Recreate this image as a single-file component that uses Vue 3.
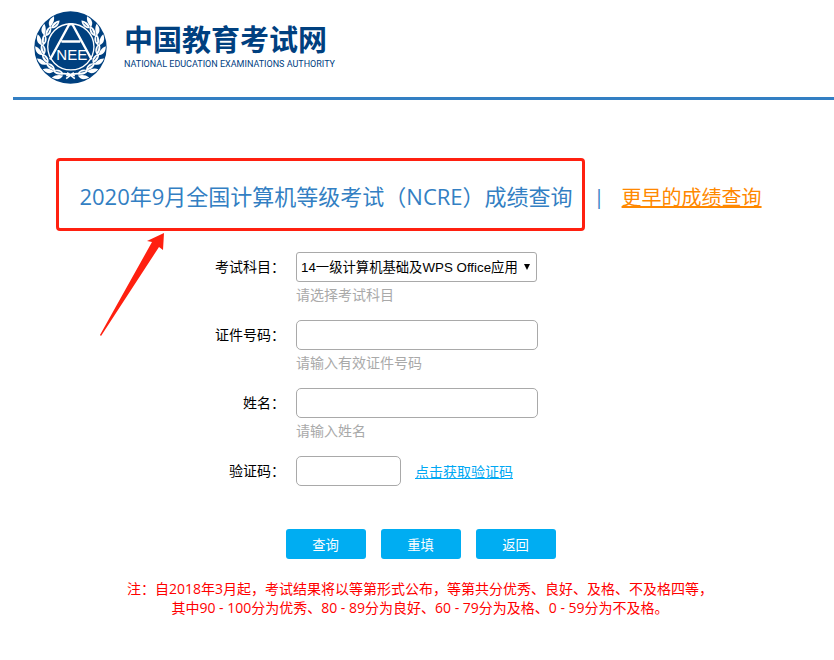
<script setup>
import { ref } from "vue";

const subjects = ["14一级计算机基础及WPS Office应用"];
const leafAngles = [34, 54, 74, 94, 114, 134, 154];

const subject = ref(subjects[0]);
const idNumber = ref("");
const name = ref("");
const captcha = ref("");

const resetForm = () => {
  subject.value = subjects[0];
  idNumber.value = "";
  name.value = "";
  captcha.value = "";
};
</script>

<template>
  <div class="page" lang="zh-CN">
    <header class="header">
      <svg class="emblem" viewBox="0 0 218 218" aria-hidden="true">
        <circle cx="109" cy="109" r="108" fill="#00407f" />
        <!-- laurel: one branch, mirrored for the other side -->
        <g
          v-for="side in [1, -1]"
          :key="side"
          :transform="`translate(109 109) scale(${side} 1)`"
        >
          <g v-for="a in leafAngles" :key="a" :transform="`rotate(${a})`">
            <path
              d="M16 -80 C6 -71 -8 -73 -18 -85 C-7 -92 8 -90 16 -80Z"
              fill="#fff"
            />
            <path
              d="M17 -85 C8 -86 -6 -92 -11 -105 C6 -106 16 -99 17 -85Z"
              fill="#fff"
            />
            <path d="M6 -80 L-9 -83" stroke="#00407f" stroke-width="2" />
          </g>
          <path
            d="M-13 84 C2 80 14 76 28 79 M-10 75 L13 93"
            fill="none"
            stroke="#fff"
            stroke-width="5"
          />
        </g>
        <circle cx="110" cy="107" r="69" fill="#00407f" stroke="#fff" stroke-width="4" />
        <path
          d="M48 145 L105 40 H115 L172 145 M82 91 H138"
          fill="none"
          stroke="#fff"
          stroke-width="7"
        />
        <text class="emblem-text" x="113" y="145" text-anchor="middle">NEE</text>
      </svg>
      <div class="brand">
        <div class="brand-cn">中国教育考试网</div>
        <div class="brand-en">NATIONAL EDUCATION EXAMINATIONS AUTHORITY</div>
      </div>
    </header>

    <main>
      <div class="title-row">
        <h1 class="title">
          2020年9月全国计算机等级考试（NCRE）成绩查询
          <svg class="arrow" viewBox="0 0 66 104" aria-hidden="true">
            <path
              d="M65 0 L48 8 L53 9 L1 102 L2 103 L60 14 L64 17Z"
              fill="#ff2010"
            />
          </svg>
        </h1>
        <span class="divider">|</span>
        <a class="earlier" href="#">更早的成绩查询</a>
      </div>

      <form @submit.prevent>
        <div class="row">
          <label for="subject">考试科目：</label>
          <div class="field">
            <div class="select-box">
              <select id="subject" v-model="subject">
                <option v-for="item in subjects" :key="item">{{ item }}</option>
              </select>
            </div>
            <p class="hint">请选择考试科目</p>
          </div>
        </div>
        <div class="row">
          <label for="idNumber">证件号码：</label>
          <div class="field">
            <input id="idNumber" v-model="idNumber" type="text" />
            <p class="hint">请输入有效证件号码</p>
          </div>
        </div>
        <div class="row">
          <label for="name">姓名：</label>
          <div class="field">
            <input id="name" v-model="name" type="text" />
            <p class="hint">请输入姓名</p>
          </div>
        </div>
        <div class="row">
          <label for="captcha">验证码：</label>
          <div class="field captcha-field">
            <input id="captcha" v-model="captcha" type="text" class="short" />
            <a class="captcha-link" href="#">点击获取验证码</a>
          </div>
        </div>
        <div class="buttons">
          <button type="submit">查询</button>
          <button type="button" @click="resetForm">重填</button>
          <button type="button">返回</button>
        </div>
      </form>

      <p class="note">
        注：自2018年3月起，考试结果将以等第形式公布，等第共分优秀、良好、及格、不及格四等，<br />
        其中90 - 100分为优秀、80 - 89分为良好、60 - 79分为及格、0 - 59分为不及格。
      </p>
    </main>
  </div>
</template>

<style>
body {
  margin: 0;
  background: #fff;
}
</style>

<style scoped>
.page {
  font-family: "Open Sans", "Noto Sans CJK SC", sans-serif;
  font-size: 14px;
  color: #000;
}
.header {
  display: flex;
  align-items: center;
  gap: 17px;
  margin-left: 13px;
  padding: 11px 0 13px 21px;
  border-bottom: 3px solid #337fc3;
}
.emblem {
  width: 73px;
  height: 73px;
}
.emblem-text {
  font-family: "Liberation Sans", sans-serif;
  font-size: 45px;
  fill: #fff;
}
.brand {
  padding-bottom: 5px;
  color: #00407f;
}
.brand-cn {
  padding-bottom: 3px;
  font-family: "Noto Sans CJK SC", sans-serif;
  font-size: 29px;
  font-weight: 700;
  line-height: 34px;
}
.brand-en {
  font-family: Roboto, sans-serif;
  font-size: 9px;
  line-height: 12px;
}
main {
  margin-left: 16px;
}
.title-row {
  display: flex;
  justify-content: center;
  align-items: center;
  padding: 58px 32px 0 0;
  color: #337fc3;
  white-space: nowrap;
}
.title {
  position: relative;
  margin: 0;
  padding: 19px 9px 16px 20px;
  border: 3px solid #ff2010;
  border-radius: 4px;
  font-size: 22px;
  font-weight: 400;
  line-height: 32px;
}
.arrow {
  position: absolute;
  top: 72px;
  left: 40px;
  width: 66px;
  height: 104px;
}
.divider,
.earlier {
  padding-top: 4px;
  font-size: 20px;
}
.divider {
  margin: 0 17px 0 9px;
}
.earlier {
  color: #ff8800;
}
form {
  padding-top: 21px;
}
.row {
  display: grid;
  grid-template-columns: minmax(0, 1fr) minmax(0, 2fr);
  column-gap: 11px;
  margin-bottom: 12px;
}
label {
  line-height: 30px;
  text-align: right;
}
input,
select {
  display: block;
  box-sizing: border-box;
  width: 242px;
  height: 30px;
  padding: 0 4px;
  border: 1px solid #a9a9a9;
  border-radius: 5px;
  background: #fff;
  color: #000;
  font-family: "Liberation Sans", "Noto Sans CJK SC", sans-serif;
}
select {
  width: 241px;
  border-radius: 3px;
  appearance: none;
}
.select-box {
  position: relative;
  width: 241px;
}
.select-box::after {
  content: "";
  position: absolute;
  top: 12px;
  right: 7px;
  border: solid transparent;
  border-width: 6px 3px 0;
  border-top-color: #000;
  pointer-events: none;
}
.hint {
  margin: 0;
  color: #a9a9a9;
  line-height: 26px;
}
.captcha-field {
  display: flex;
  align-items: center;
  gap: 14px;
}
.short {
  width: 105px;
}
.captcha-link {
  color: #00a8f3;
}
.buttons {
  display: flex;
  justify-content: center;
  gap: 15px;
  padding: 31px 9px 0 0;
}
button {
  width: 80px;
  height: 30px;
  padding: 0;
  border: 0;
  border-radius: 3px;
  background: #00adf2;
  color: #fff;
  font-family: "Liberation Sans", "Noto Sans CJK SC", sans-serif;
}
.note {
  margin: 20px 0 0;
  padding-right: 10px;
  color: #ff0000;
  line-height: 19px;
  text-align: center;
}
</style>
